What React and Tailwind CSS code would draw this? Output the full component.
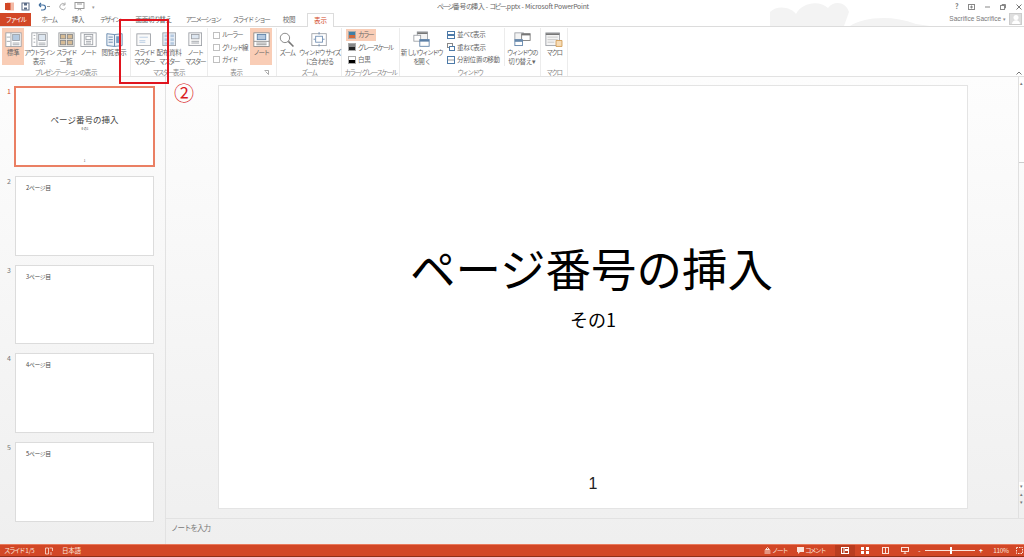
import React from "react";

const FONT = { fontFamily: '"Noto Sans CJK JP","Noto Sans",sans-serif' };

/* Meiryo UI has narrow kana: kana runs get a tighter tracking than kanji runs */
function K({ children }) {
  const runs = String(children).match(/[ァ-ヶーぁ-ん]+|[^ァ-ヶーぁ-ん]+/g) || [];
  return (
    <>
      {runs.map((r, i) =>
        /[ァ-ヶーぁ-ん]/.test(r)
          ? <span key={i} className="tracking-[-1.500px]">{r}</span>
          : <span key={i} className="tracking-[-0.200px]">{r}</span>
      )}
    </>
  );
}

function Ico({ w = 18, h = 18, children }) {
  return <svg width={w * 0.85} height={h * 0.85} viewBox={`0 0 ${w} ${h}`} fill="none" className="shrink-0">{children}</svg>;
}
const G = "#9a9ea4";
const B = "#b4c9e0";

const icons = {
  normal: <Ico w={20} h={18}><rect x="1" y="1" width="18" height="16" stroke={G} fill="#fff"/><path d="M7 1v16" stroke={G}/><path d="M2 6h4M2 11h4" stroke={G}/><rect x="9" y="3" width="8" height="7" fill={B} stroke={G}/><path d="M9 13h8M9 15h8" stroke={G}/></Ico>,
  outline: <Ico w={20} h={18}><rect x="1" y="1" width="18" height="16" stroke={G} fill="#fff"/><path d="M7 1v16" stroke={G}/><path d="M3 4h2M3 8h2M3 12h2" stroke={G}/><rect x="9" y="3" width="8" height="7" fill="#dde6f0" stroke={G}/><path d="M9 13h8M9 15h8" stroke={G}/></Ico>,
  sorter: <Ico w={20} h={18}><rect x="1" y="1" width="18" height="16" fill="#eeeae2" stroke={G}/><rect x="3" y="3" width="6" height="5" fill="#d6bb95" stroke="#888"/><rect x="11" y="3" width="6" height="5" fill="#d6bb95" stroke="#888"/><rect x="3" y="10" width="6" height="5" fill="#d6bb95" stroke="#888"/><rect x="11" y="10" width="6" height="5" fill="#d6bb95" stroke="#888"/></Ico>,
  notes: <Ico w={20} h={18}><rect x="1" y="1" width="18" height="16" stroke={G} fill="#fff"/><rect x="5" y="3" width="10" height="12" stroke={G}/><path d="M7 11h6M7 13h6" stroke={G}/><rect x="7" y="5" width="6" height="4" stroke={G}/></Ico>,
  reading: <Ico w={20} h={18}><path d="M1 2l9 1 9-1v14l-9 1-9-1z" fill="#eef3f8" stroke="#5b7fa6"/><path d="M10 3v14" stroke="#5b7fa6"/><path d="M3 6h5M3 9h5M3 12h5" stroke="#5b7fa6"/><rect x="12" y="5" width="5" height="8" fill="#7a9cc0"/></Ico>,
  master: <Ico w={18} h={16}><rect x="1" y="1" width="16" height="14" stroke={G} fill="#fafafa"/><path d="M4 5h10M4 9h7M4 11h7" stroke={B}/></Ico>,
  handout: <Ico w={17} h={17}><rect x="1" y="1" width="15" height="15" stroke={G} fill="#e6edf5"/><rect x="3" y="3" width="4" height="3" fill={B}/><rect x="10" y="3" width="4" height="3" fill={B}/><rect x="3" y="7.500" width="4" height="3" fill={B}/><rect x="10" y="7.500" width="4" height="3" fill={B}/><rect x="3" y="12" width="4" height="3" fill={B}/><rect x="10" y="12" width="4" height="3" fill={B}/></Ico>,
  notesM: <Ico w={17} h={17}><rect x="1" y="1" width="15" height="15" stroke={G} fill="#fafafa"/><rect x="4" y="3" width="9" height="5" fill="#dde6f0" stroke={G}/><path d="M4 11h9M4 13h9" stroke={G}/></Ico>,
  notesOn: <Ico w={20} h={18}><rect x="1" y="1" width="18" height="16" stroke="#888" fill="#fff"/><rect x="5" y="3" width="10" height="6" fill={B} stroke="#5b7fa6"/><path d="M1 11h18" stroke="#888"/><path d="M4 13h12M4 15h12" stroke="#888"/></Ico>,
  zoom: <Ico w={18} h={17}><circle cx="7" cy="7" r="5.500" stroke="#777" fill="#fff"/><path d="M11 11l6 6" stroke="#777" strokeWidth="1.800"/></Ico>,
  fit: <Ico w={19} h={17}><rect x="1" y="2" width="17" height="14" stroke={G} fill="#fff"/><rect x="5.500" y="5" width="8" height="7" stroke="#6b8bb0"/><path d="M9.500 0v3M9.500 14v3M3 8.500h2M14 8.500h2" stroke="#6b8bb0"/></Ico>,
  newWin: <Ico w={20} h={19}><rect x="5" y="1" width="12" height="9" stroke={G} fill="#f4f4f4"/><path d="M5 2.500h12" stroke="#777" strokeWidth="2"/><rect x="1" y="5" width="8" height="7" stroke={G} fill="#fff"/><rect x="8" y="10" width="11" height="8" stroke="#5b7fa6" fill="#fff"/><path d="M8 11.500h11" stroke="#5b7fa6" strokeWidth="2"/></Ico>,
  switchWin: <Ico w={20} h={17}><rect x="1" y="1" width="10" height="8" stroke={G} fill="#f4f4f4"/><rect x="9" y="2" width="10" height="8" stroke="#777" fill="#fff"/><path d="M9 3h10" stroke="#777" strokeWidth="2"/><rect x="1" y="9" width="9" height="7" stroke="#5b7fa6" fill="#fff"/><path d="M1 10.500h9" stroke="#5b7fa6" strokeWidth="2"/></Ico>,
  macro: <Ico w={21} h={18}><rect x="1" y="1" width="16" height="15" stroke={G} fill="#f4f4f4"/><path d="M1 2.500h16" stroke="#777" strokeWidth="2"/><path d="M3 6h12M3 9h12M3 12h8" stroke="#c4c4c4"/><path d="M13 10h7v7h-7z" fill="#f8dcb5" stroke="#d09a50"/></Ico>,
};

function Txt({ children }) {
  return <span className="block text-center leading-[8.500px] whitespace-nowrap"><K>{children}</K></span>;
}

function Big({ w, icon, lines, on }) {
  return (
    <div className={`flex flex-col items-center pt-[3px] h-[37px] shrink-0 ${on ? "bg-[#f9cdb6]" : ""}`} style={{ width: w }}>
      <div className="h-[17px] flex items-center">{icon}</div>
      <div>{lines.map((l, i) => <Txt key={i}>{l}</Txt>)}</div>
    </div>
  );
}

function Group({ w, label, children, launcher, labelClass = "" }) {
  return (
    <div className="relative flex flex-col h-[48px] shrink-0 border-r border-[#ececec]" style={{ width: w }}>
      <div className="flex h-[40px]">{children}</div>
      <div className={`text-center text-[#888] leading-[8px] h-[8px] whitespace-nowrap ${labelClass}`}><K>{label}</K></div>
      {launcher && <svg width="5" height="5" viewBox="0 0 5 5" className="absolute right-[7px] bottom-[1px]"><path d="M0.500 0.500h4v4M4.500 4.500l-3-3" stroke="#888" fill="none" strokeWidth="0.700"/></svg>}
    </div>
  );
}

function Check({ label }) {
  return (
    <div className="flex items-center h-[12.300px] gap-[2px]">
      <span className="w-[7px] h-[7px] border border-[#c0c0c0] bg-white shrink-0" />
      <span className="whitespace-nowrap"><K>{label}</K></span>
    </div>
  );
}

function Swatch({ label, on, from, to }) {
  return (
    <div className={`flex items-center h-[12.300px] w-[30px] gap-[2px] whitespace-nowrap pl-[2px] ${on ? "bg-[#f9cdb6]" : ""}`}>
      <span className="w-[8px] h-[8px] shrink-0 border border-[#aaa]" style={{ background: `linear-gradient(${from} 50%, ${to} 50%)` }} />
      <span><K>{label}</K></span>
    </div>
  );
}

function WinRow({ label, icon }) {
  return (
    <div className="flex items-center h-[12.300px] gap-[2px] whitespace-nowrap">
      <svg width="8" height="8" viewBox="0 0 8 8" className="shrink-0">{icon}</svg>
      <span><K>{label}</K></span>
    </div>
  );
}

function Thumb({ n, text, selected, title }) {
  return (
    <div className={`flex shrink-0 ${selected ? "h-[81px]" : "h-[79.700px]"}`}>
      <div className={`w-[15px] pl-[7px] text-[7px] leading-[10px] ${selected ? "text-[#d24726]" : "text-[#777]"}`}>{n}</div>
      <div className={`bg-white relative ${selected ? "w-[141px] border-2 border-[#ea7f63] -ml-[1px]" : "w-[139px] border border-[#dcdcdc]"}`}>
        {title ? (
          <div className="flex flex-col items-center h-full pt-[25px] text-[#444]">
            <span className="text-[8.500px] leading-[12px] whitespace-nowrap">ページ番号の挿入</span>
            <span className="text-[3px] leading-[6px] mt-[1px]">その1</span>
            <span className="text-[3px] leading-[4px] mt-auto mb-[2px]">1</span>
          </div>
        ) : (
          <div className="pl-[10px] pt-[7px] text-[5.800px] leading-[8px] tracking-[-0.300px] text-[#444]">{text}</div>
        )}
      </div>
    </div>
  );
}

export default function App() {
  const tabs = [["ホーム", 36], ["挿入", 22], ["デザイン", 42], ["画面切り替え", 44], ["アニメーション", 56], ["スライド ショー", 40], ["校閲", 36]];
  return (
    <div className="w-[1024px] h-[557px] overflow-hidden relative bg-white text-[#666] text-[6.500px] flex flex-col" style={FONT}>
      {/* title bar */}
      <div className="h-[13px] relative flex items-center shrink-0">
        <svg className="absolute left-[770px] top-0" width="160" height="26" viewBox="0 0 160 26">
          <path d="M0 26V12C8 4 22 8 26 14 32 2 50 0 58 8 64 0 76 2 79 12L74 26zM80 26c12-8 40-12 66-2l14 2z" fill="#f3f3f3"/>
        </svg>
        <div className="flex items-center gap-[7px] pl-[5px] relative">
          <svg width="9" height="9" viewBox="0 0 9 9"><rect x="2" y="0.500" width="7" height="8" fill="#f3b9a5"/><rect x="0" y="1" width="5.500" height="7" fill="#d24726"/></svg>
          <svg width="9" height="9" viewBox="0 0 9 9"><rect x="1" y="1" width="7" height="7" fill="none" stroke="#5b6b85"/><rect x="3" y="1" width="3" height="2.500" fill="#5b6b85"/><rect x="3" y="5.500" width="3" height="2" fill="#5b6b85"/></svg>
          <svg width="14" height="9" viewBox="0 0 14 9"><path d="M2 3h4a2.500 2.500 0 0 1 0 5H4M2 3l2-2M2 3l2 2" stroke="#3f6d9e" fill="none" strokeWidth="1.100"/><path d="M10 4h3v1h-3z" fill="#999"/></svg>
          <svg width="9" height="9" viewBox="0 0 9 9"><path d="M7 2.500A3 3 0 1 0 7.500 6M7 0.500V3H4.500" stroke="#aaa" fill="none"/></svg>
          <svg width="11" height="9" viewBox="0 0 11 9"><rect x="1" y="0.500" width="9" height="6" fill="none" stroke="#999"/><path d="M3 2h5M4 8.500l1.500-2 1.500 2" stroke="#999" fill="none"/></svg>
          <span className="text-[5px] text-[#999]">▾</span>
        </div>
        <span className="absolute left-0 right-0 pl-[2px] text-center text-[6.800px] text-[#666] leading-[13px] whitespace-nowrap"><K>ページ番号の挿入 - コピー.pptx - Microsoft PowerPoint</K></span>
        <div className="ml-auto flex items-center gap-[10px] pr-[2px] text-[#777] relative">
          <span className="text-[7px] font-bold leading-[13px] w-[3px]">?</span>
          <svg width="7" height="6" viewBox="0 0 7 6"><rect x="0.500" y="0.500" width="6" height="5" stroke="#888" fill="none"/><path d="M3.500 1.500v3M2 3h3" stroke="#888"/></svg>
          <svg width="5" height="2" viewBox="0 0 5 2"><path d="M0 1h5" stroke="#888"/></svg>
          <svg width="6" height="6" viewBox="0 0 6 6"><rect x="0.500" y="1.500" width="4" height="4" stroke="#888" fill="none"/><path d="M2 1.500v-1h3.500v3.500h-1" stroke="#888" fill="none"/></svg>
          <svg width="6" height="6" viewBox="0 0 6 6"><path d="M0.500 0.500l5 5M5.500 0.500l-5 5" stroke="#777" strokeWidth="1"/></svg>
        </div>
      </div>
      {/* tab row */}
      <div className="h-[14px] relative shrink-0 flex border-b border-[#dcdcdc]">
        <div className="w-[31px] h-[13px] bg-[#d24726] text-white text-center leading-[13px] shrink-0"><K>ファイル</K></div>
        {tabs.map(([t, w]) => <div key={t} className="text-center leading-[13px] whitespace-nowrap shrink-0" style={{ width: w }}><K>{t}</K></div>)}
        <div className="w-[27px] h-[14px] bg-white border border-b-0 border-[#dcdcdc] text-[#d24726] text-center leading-[13px] shrink-0">表示</div>
        <div className="ml-auto flex items-center pr-[2px] -mt-[1px] text-[#777] relative">
          <span className="text-[6.500px] whitespace-nowrap" style={{ fontFamily: '"Liberation Sans",sans-serif' }}>Sacrifice Sacrifice</span>
          <span className="text-[5px] ml-[2px] mr-[3px] text-[#888]">▾</span>
          <span className="w-[13px] h-[12px] bg-[#dedede] border border-[#ccc] flex items-end justify-center overflow-hidden">
            <svg width="10" height="10" viewBox="0 0 10 10"><circle cx="5" cy="3.500" r="2.500" fill="#fff"/><path d="M1 10c0-5 8-5 8 0z" fill="#fff"/></svg>
          </span>
        </div>
      </div>
      {/* ribbon */}
      <div className="h-[50px] shrink-0 flex items-start pt-[1px] pl-[2px] border-b border-[#e2e2e2] relative">
        <Group w={129} label="プレゼンテーションの表示">
          <Big w={22} on icon={icons.normal} lines={["標準"]} />
          <Big w={30} icon={icons.outline} lines={["アウトライン", "表示"]} />
          <Big w={24} icon={icons.sorter} lines={["スライド", "一覧"]} />
          <Big w={20} icon={icons.notes} lines={["ノート"]} />
          <Big w={32} icon={icons.reading} lines={["閲覧表示"]} />
        </Group>
        <Group w={77} label="マスター表示">
          <Big w={26} icon={icons.master} lines={["スライド", "マスター"]} />
          <Big w={24} icon={icons.handout} lines={["配布資料", "マスター"]} />
          <div className="ml-[1px]"><Big w={26} icon={icons.notesM} lines={["ノート", "マスター"]} /></div>
        </Group>
        <Group w={69} label="表示" launcher labelClass="pr-[11px]">
          <div className="w-[42px] pl-[5px] pt-[1px] flex flex-col">
            <Check label="ルーラー" /><Check label="グリッド線" /><Check label="ガイド" />
          </div>
          <Big w={22} on icon={icons.notesOn} lines={["ノート"]} />
        </Group>
        <Group w={65} label="ズーム">
          <Big w={20} icon={icons.zoom} lines={["ズーム"]} />
          <Big w={45} icon={icons.fit} lines={["ウィンドウ サイズ", "に合わせる"]} />
        </Group>
        <Group w={58} label="カラー/グレースケール">
          <div className="pl-[4px] pt-[1px] flex flex-col">
            <Swatch on label="カラー" from="#3f7fa6" to="#d2683a" />
            <Swatch label="グレースケール" from="#888" to="#222" />
            <Swatch label="白黒" from="#fff" to="#000" />
          </div>
        </Group>
        <Group w={141} label="ウィンドウ">
          <Big w={43} icon={icons.newWin} lines={["新しいウィンドウ", "を開く"]} />
          <div className="w-[62px] pl-[4px] pt-[1px] flex flex-col shrink-0 border-r border-[#ececec] h-[38px]">
            <WinRow label="並べて表示" icon={<><rect x="0.500" y="0.500" width="7" height="3" stroke="#4d7aa8" fill="none"/><rect x="0.500" y="4.500" width="7" height="3" stroke="#4d7aa8" fill="none"/></>} />
            <WinRow label="重ねて表示" icon={<><rect x="0.500" y="0.500" width="5" height="4" stroke="#888" fill="#fff"/><rect x="2.500" y="3.500" width="5" height="4" stroke="#4d7aa8" fill="#fff"/></>} />
            <WinRow label="分割位置の移動" icon={<><rect x="0.500" y="0.500" width="7" height="7" stroke="#4d7aa8" fill="none"/><path d="M1 4h6" stroke="#999"/></>} />
          </div>
          <Big w={34} icon={icons.switchWin} lines={["ウィンドウの", "切り替え ▾"]} />
        </Group>
        <Group w={27} label="マクロ">
          <Big w={26} icon={icons.macro} lines={["マクロ"]} />
        </Group>
        <svg width="6" height="4" viewBox="0 0 6 4" className="absolute right-[2px] bottom-[1px]"><path d="M0.500 3.500l2.500-2.500 2.500 2.500" stroke="#777" fill="none"/></svg>
      </div>
      {/* body */}
      <div className="flex-1 min-h-0 flex bg-linear-to-b from-[#fdfdfd] to-[#efefef]">
        <div className="w-[166px] shrink-0 border-r border-[#e2e2e2] pt-[9px] flex flex-col gap-[9px]">
          <Thumb n="1" selected title />
          <Thumb n="2" text="2ページ目" />
          <Thumb n="3" text="3ページ目" />
          <Thumb n="4" text="4ページ目" />
          <Thumb n="5" text="5ページ目" />
        </div>
        <div className="flex-1 min-w-0 flex flex-col">
          <div className="flex-1 min-h-0 flex">
            <div className="flex-1 pl-[52px] pt-[8px]">
              <div className="w-[750px] h-[424px] bg-white border border-[#e4e4e4] flex flex-col items-center text-black">
                <div className="mt-[153px] text-[45.500px] leading-[56px] whitespace-nowrap -ml-[3px]">ページ番号の挿入</div>
                <div className="mt-[12px] text-[18px] leading-[24px]">その1</div>
                <div className="mt-auto mb-[13px] text-[16px] leading-[22px] text-[#222]" style={{ fontFamily: '"Liberation Sans",sans-serif' }}>1</div>
              </div>
            </div>
            <div className="w-[6px] shrink-0 border-l border-[#e0e0e0] flex flex-col pt-[2px]">
              <div className="h-[8px] bg-white text-center leading-[8px] text-[5px] text-[#777]">▴</div>
              <div className="h-[76px] bg-white border-b border-[#ccc]" />
              <div className="flex-1" />
              <div className="h-[8px] bg-white text-center leading-[8px] text-[5px] text-[#777]">▾</div>
              <div className="h-[8px] text-center leading-[8px] text-[5px] text-[#777]">▴</div>
              <div className="h-[8px] text-center leading-[8px] text-[5px] text-[#777] mb-[12px]">▾</div>
            </div>
          </div>
          <div className="h-[26px] shrink-0 border-t border-[#e2e2e2] pl-[5px] text-[#777] text-[7.500px] leading-[18px] tracking-[-1px]">ノートを入力</div>
        </div>
      </div>
      {/* status bar */}
      <div className="h-[13px] shrink-0 bg-[#d24726] border-t border-[#e9795c] border-b border-b-[#8f2f18] text-[#fbe3da] flex items-center relative">
        <span className="pl-[4px] w-[45px] whitespace-nowrap"><K>スライド 1/5</K></span>
        <svg width="8" height="8" viewBox="0 0 8 8"><path d="M0.500 1h3v6h-3zM4.500 1h3v3M6 5v3" stroke="#fbe3da" fill="none" strokeWidth="0.800"/></svg>
        <span className="ml-[9px]"><K>日本語</K></span>
        <div className="ml-auto flex items-center h-full whitespace-nowrap">
          <svg width="7" height="7" viewBox="0 0 7 7" className="mr-[1px]"><path d="M3.500 0.500l2 2h-4zM0.500 4h6M0.500 6h6" stroke="#fbe3da" fill="none"/></svg>
          <span className="w-[25px]"><K>ノート</K></span>
          <svg width="7" height="7" viewBox="0 0 7 7" className="mr-[1px]"><path d="M0 0h7v5H3L1 7V5H0z" fill="#fbe3da"/></svg>
          <span className="w-[30px]"><K>コメント</K></span>
          <div className="w-[20px] h-full bg-[#b93c1f] flex items-center justify-center">
            <svg width="8" height="7" viewBox="0 0 8 7"><rect x="0.500" y="0.500" width="7" height="6" stroke="#fff" fill="none"/><path d="M3 1v5" stroke="#fff"/><rect x="4" y="2" width="3" height="2" fill="#fff"/></svg>
          </div>
          <div className="w-[20px] flex justify-center"><svg width="8" height="7" viewBox="0 0 8 7"><path d="M0 0h3v3H0zM5 0h3v3H5zM0 4h3v3H0zM5 4h3v3H5z" fill="#fff"/></svg></div>
          <div className="w-[20px] flex justify-center"><svg width="7" height="7" viewBox="0 0 7 7"><rect x="0.500" y="0.500" width="6" height="6" stroke="#fbe3da" fill="none"/><path d="M3.500 0v7" stroke="#fbe3da"/></svg></div>
          <div className="w-[20px] flex justify-center"><svg width="8" height="7" viewBox="0 0 8 7"><rect x="0.500" y="0.500" width="7" height="4" stroke="#fbe3da" fill="none"/><path d="M4 5v2M2.500 7h3" stroke="#fbe3da"/></svg></div>
          <span className="w-[5px] ml-[2px] text-white text-center">-</span>
          <div className="w-[50px] mx-[3px] h-px bg-[#fbe3da] relative">
            <span className="absolute left-[25px] -top-[3px] w-[2px] h-[7px] bg-white" />
          </div>
          <span className="w-[6px] mr-[2px] text-white text-center font-bold">+</span>
          <span className="w-[30px] text-center tracking-[-0.300px]">110%</span>
          <svg width="7" height="7" viewBox="0 0 7 7" className="mr-[1px]"><rect x="0.500" y="0.500" width="6" height="6" stroke="#fbe3da" strokeDasharray="1.500 1" fill="none"/></svg>
        </div>
      </div>
      {/* annotations */}
      <div className="absolute left-[119px] top-[19px] w-[50px] h-[65px] border-2 border-[#e0141e]" />
      <div className="absolute left-[172px] top-[82px] w-[24px] text-center text-[20px] leading-[24px] text-[#d91c24]" style={{ fontFamily: '"DejaVu Serif","Noto Sans CJK JP",serif' }}>②</div>
    </div>
  );
}
